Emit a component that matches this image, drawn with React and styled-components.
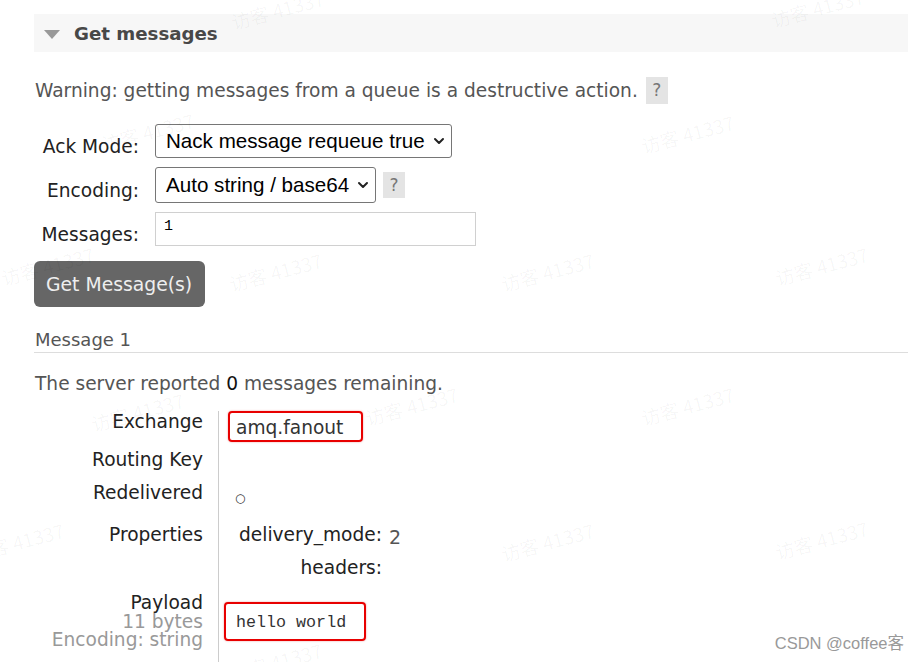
import React from 'react'
import styled, { createGlobalStyle } from 'styled-components'

const GlobalStyle = createGlobalStyle`
  html, body {
    margin: 0;
    padding: 0;
    background: #fff;
  }
  body {
    font-family: "DejaVu Sans", Verdana, sans-serif;
    color: #484848;
    overflow: hidden;
  }
`

const watermarks = [
  [230, -4], [770, -6], [100, 118], [640, 120], [0, 252],
  [228, 258], [500, 258], [774, 252], [90, 398], [364, 392],
  [640, 392], [-30, 528], [500, 528], [774, 526], [228, 648]
]

const App = () => {
  return (
    <Page>
      <GlobalStyle />

      <SectionHeader>
        <Triangle />
        <h2>Get messages</h2>
      </SectionHeader>

      <Warning>
        Warning: getting messages from a queue is a destructive action.
        <Help>?</Help>
      </Warning>

      <Form>
        <Label>Ack Mode:</Label>
        <Control>
          <Select width={297} height={34}>
            <span>Nack message requeue true</span>
            <Chevron />
          </Select>
        </Control>

        <Label>Encoding:</Label>
        <Control>
          <Select width={221} height={36}>
            <span>Auto string / base64</span>
            <Chevron />
          </Select>
          <Help small>?</Help>
        </Control>

        <Label>Messages:</Label>
        <Control>
          <Input>1</Input>
        </Control>
      </Form>

      <Button>Get Message(s)</Button>

      <MessageTitle>Message 1</MessageTitle>

      <Remaining>
        The server reported <b>0</b> messages remaining.
      </Remaining>

      <Details>
        <Row h={38}>
          <Key>Exchange</Key>
          <Value>
            <Marked w={135} h={31} left={9}>amq.fanout</Marked>
          </Value>
        </Row>
        <Row h={33}>
          <Key>Routing Key</Key>
          <Value />
        </Row>
        <Row h={42}>
          <Key>Redelivered</Key>
          <Value>
            <Circle>○</Circle>
          </Value>
        </Row>
        <Row h={68}>
          <Key>Properties</Key>
          <Value>
            <Props>
              <dt>delivery_mode:</dt>
              <dd className="num">2</dd>
              <dt>headers:</dt>
              <dd />
            </Props>
          </Value>
        </Row>
        <Row h={80}>
          <Key>
            Payload
            <SubLines>
              <div>11 bytes</div>
              <div>Encoding: string</div>
            </SubLines>
          </Key>
          <Value>
            <Marked w={142} h={39} left={5} top={10} mono>
              hello world
            </Marked>
          </Value>
        </Row>
      </Details>

      {watermarks.map(([x, y], i) => (
        <Watermark key={i} style={{ left: x, top: y }}>
          访客 41337
        </Watermark>
      ))}
      <Credit>CSDN @coffee客</Credit>
    </Page>
  )
}

export default App

const Chevron = () => (
  <svg width="12" height="12" viewBox="0 0 12 12">
    <path
      d="M2 4 L6 8 L10 4"
      fill="none"
      stroke="#222"
      strokeWidth="2"
      strokeLinecap="round"
      strokeLinejoin="round"
    />
  </svg>
)

const Page = styled.div`
  position: relative;
  width: 908px;
  height: 662px;
  padding: 14px 0 0 34px;
  box-sizing: border-box;
  overflow: hidden;
`

const SectionHeader = styled.div`
  display: flex;
  align-items: center;
  height: 38px;
  background: #f7f7f7;
  padding-left: 10px;

  h2 {
    margin: 1px 0 0 14px;
    font-size: 18.2px;
    font-weight: bold;
    color: #484848;
  }
`

const Triangle = styled.span`
  width: 0;
  height: 0;
  border-left: 8px solid transparent;
  border-right: 8px solid transparent;
  border-top: 9px solid #999;
  margin-top: 2px;
`

const Warning = styled.p`
  display: flex;
  align-items: center;
  margin: 25px 0 0 1px;
  font-size: 18.6px;
  line-height: 27px;
  color: #555;
`

const Help = styled.span`
  display: inline-flex;
  align-items: center;
  justify-content: center;
  width: 22px;
  height: ${props => (props.small ? 26 : 27)}px;
  margin-left: ${props => (props.small ? 7 : 8)}px;
  background: #e4e4e4;
  color: #777;
  font-size: 17px;
`

const Form = styled.div`
  display: grid;
  grid-template-columns: 105px auto;
  column-gap: 16px;
  row-gap: 9px;
  align-items: center;
  margin-top: 20px;
`

const Label = styled.label`
  text-align: right;
  font-size: 18.6px;
  line-height: 22px;
  color: #222;
  padding-top: 12px;
`

const Control = styled.div`
  display: flex;
  align-items: center;
`

const Select = styled.div`
  display: flex;
  align-items: center;
  justify-content: space-between;
  box-sizing: border-box;
  width: ${props => props.width}px;
  height: ${props => props.height}px;
  padding: 0 6px 0 10px;
  border: 1px solid #767676;
  border-radius: 3px;
  background: #fff;
  font-family: "Liberation Sans", Arial, sans-serif;
  font-size: 20.6px;
  color: #000;
`

const Input = styled.div`
  box-sizing: border-box;
  width: 321px;
  height: 34px;
  padding: 5px 8px;
  border: 1px solid #d0d0d0;
  font-family: "Liberation Mono", monospace;
  font-size: 15px;
  color: #000;
`

const Button = styled.button`
  display: block;
  margin-top: 15px;
  width: 171px;
  height: 46px;
  padding: 0 12px;
  text-align: left;
  white-space: nowrap;
  border: none;
  border-radius: 6px;
  background: #666;
  color: #eee;
  font-family: "DejaVu Sans", Verdana, sans-serif;
  font-size: 18.8px;
`

const MessageTitle = styled.h3`
  margin: 22px 0 0;
  padding: 0 0 1px 1px;
  font-size: 18px;
  font-weight: normal;
  line-height: 22px;
  color: #555;
  border-bottom: 1px solid #ddd;
`

const Remaining = styled.p`
  margin: 20px 0 0 1px;
  font-size: 18.6px;
  line-height: 22px;
  color: #555;

  b {
    font-weight: normal;
    color: #111;
  }
`

const Details = styled.div`
  margin-top: 16px;
`

const Row = styled.div`
  display: grid;
  grid-template-columns: 184px 1fr;
  height: ${props => props.h}px;
`

const Key = styled.div`
  padding-right: 15px;
  text-align: right;
  font-size: 18.6px;
  line-height: 22px;
  color: #222;
`

const SubLines = styled.div`
  margin-top: -1px;
  color: #999;
  line-height: 18px;
`

const Value = styled.div`
  border-left: 1px solid #ccc;
`

const Marked = styled.div`
  box-sizing: border-box;
  width: ${props => props.w}px;
  height: ${props => props.h}px;
  margin: ${props => props.top || 0}px 0 0 ${props => props.left}px;
  border: 2px solid #e80000;
  border-radius: 4px;
  box-shadow: 0 0 2px rgba(200, 0, 0, 0.4);
  display: flex;
  align-items: center;
  font-family: ${props =>
    props.mono ? '"Liberation Mono", monospace' : '"DejaVu Sans", Verdana, sans-serif'};
  font-size: ${props => (props.mono ? 16.7 : 18.6)}px;
  color: #333;
  padding: ${props => (props.mono ? '2px 0 0 10px' : '2px 0 0 6px')};
`

const Circle = styled.div`
  margin: 5px 0 0 16px;
  font-size: 12px;
  line-height: 22px;
  color: #333;
`

const Props = styled.dl`
  display: grid;
  grid-template-columns: 145px auto;
  column-gap: 7px;
  row-gap: 9px;
  margin: 0 0 0 18px;
  font-size: 18.6px;
  line-height: 22px;

  dt {
    text-align: right;
    color: #222;
  }

  dd {
    margin: 0;
  }

  .num {
    color: #555;
    font-size: 19px;
    padding-top: 2px;
  }
`

const Watermark = styled.div`
  position: absolute;
  transform: rotate(-15deg);
  font-family: "Noto Sans CJK SC", "DejaVu Sans", sans-serif;
  font-size: 19px;
  color: rgba(0, 0, 0, 0.04);
  white-space: nowrap;
  pointer-events: none;
`

const Credit = styled.div`
  position: absolute;
  right: 4px;
  bottom: 8px;
  font-family: "Liberation Sans", "Noto Sans CJK SC", sans-serif;
  font-size: 16.5px;
  color: #999;
`
